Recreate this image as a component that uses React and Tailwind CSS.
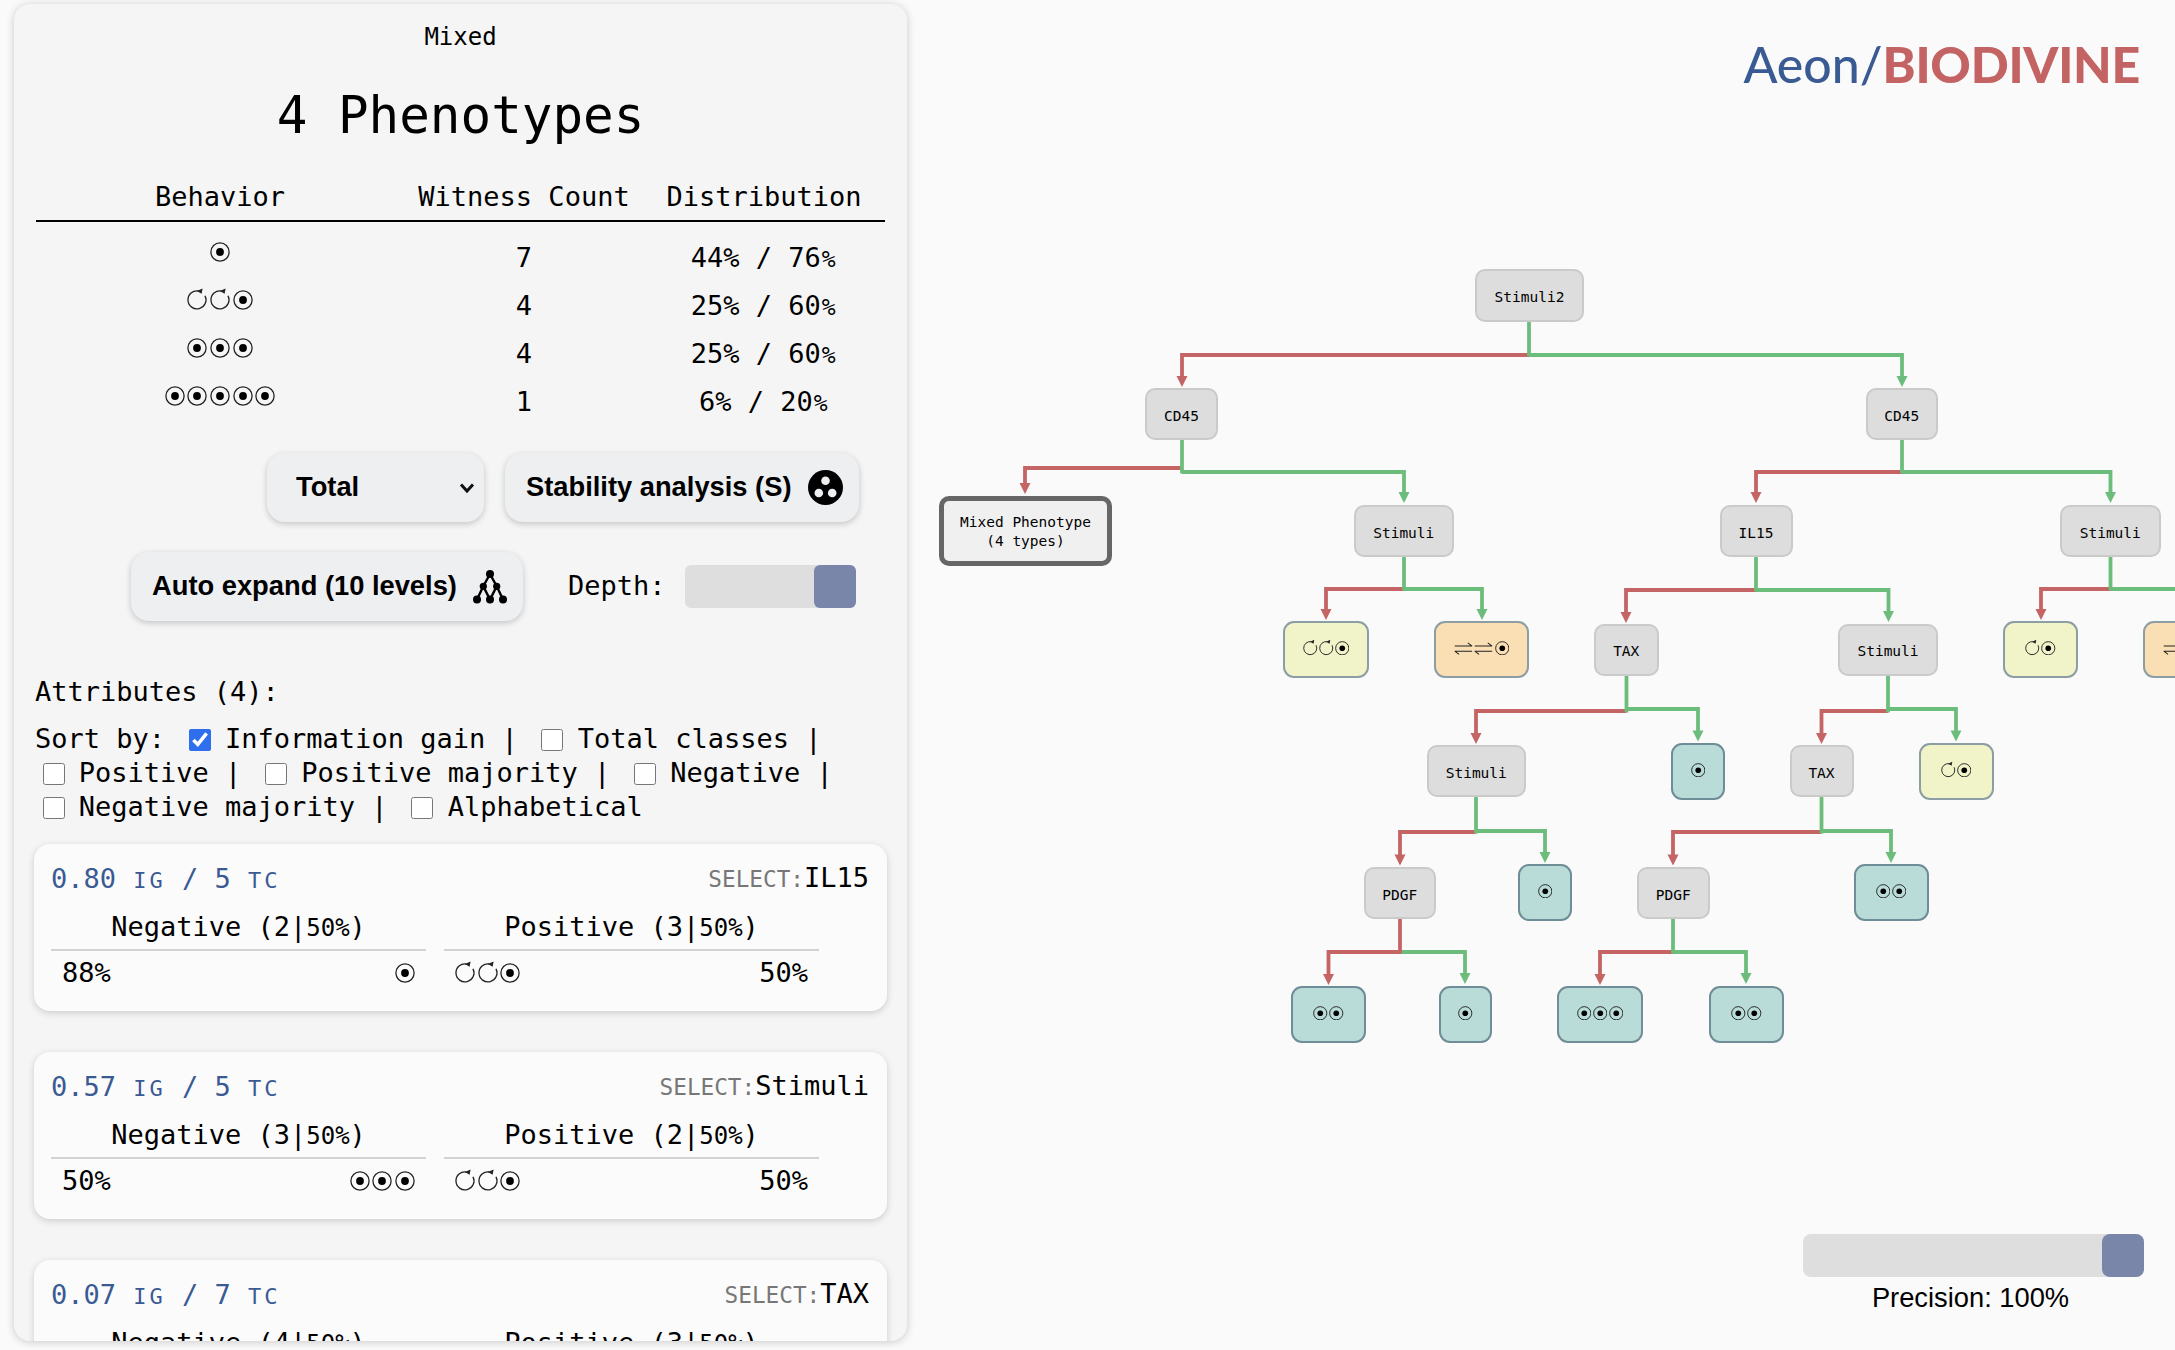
import React from "react";

const MONO = "font-['DejaVu_Sans_Mono','Liberation_Mono',monospace]";
const OX = 907;

function Stable({ s }) {
  return (
    <svg width={s} height={s} viewBox="0 0 20 20" className="block shrink-0">
      <circle cx="10" cy="10" r="9.1" fill="none" stroke="#222" strokeWidth="1.3" />
      <circle cx="10" cy="10" r="3.9" fill="#000" />
    </svg>
  );
}
function Osc({ s }) {
  return (
    <svg width={s} height={s} viewBox="0 0 20 20" className="block shrink-0 overflow-visible">
      <path d="M11.5 1 A9 9 0 1 0 18 5.8" fill="none" stroke="#222" strokeWidth="1.3" />
      <path d="M9.8 1 L15.6 -1.6 L14.6 3.8 Z" fill="#222" />
    </svg>
  );
}
function Dis({ s }) {
  return (
    <svg width={s * 1.3} height={s} viewBox="0 0 26 20" className="block shrink-0">
      <path d="M1 7 H25 M19 2.5 L25 7" fill="none" stroke="#222" strokeWidth="1.4" />
      <path d="M25 14 H1 M7 18.5 L1 14" fill="none" stroke="#222" strokeWidth="1.4" />
    </svg>
  );
}
function Beh({ k, s = 20, gap = "gap-[2.7px]" }) {
  return (
    <span className={`inline-flex items-center ${gap}`}>
      {k.split("").map((c, i) =>
        c === "s" ? <Stable key={i} s={s} /> : c === "o" ? <Osc key={i} s={s} /> : <Dis key={i} s={s} />
      )}
    </span>
  );
}

const rows = [
  ["s", "7", "44% / 76"],
  ["oos", "4", "25% / 60"],
  ["sss", "4", "25% / 60"],
  ["sssss", "1", "6% / 20"],
];

function Check({ label, checked, last }) {
  return (
    <span className="whitespace-nowrap">
      <input
        type="checkbox"
        readOnly
        checked={!!checked}
        className="w-[22px] h-[22px] ml-[7.5px] mr-[-2px] align-[-3px] accent-[#2f6fed]"
      />{" "}
      {label}
      {last ? "" : " |"}
    </span>
  );
}

function Card({ ig, tc, name, neg, pos, negK, negP, posK, posP }) {
  return (
    <div className="bg-[#fbfbfb] rounded-[16px] shadow-[0_2px_7px_rgba(0,0,0,0.17)] pt-[18px] pb-[21px] pl-[17px] pr-[18px] mb-[41px]">
      <div className="flex justify-between items-baseline h-[34px] leading-[34px]">
        <span className="text-[#3a5a94]">
          {ig} <span className="text-[22px] tracking-[3px] pl-[1px]">IG</span> / {tc}{" "}
          <span className="text-[22px] tracking-[3px] pl-[1px]">TC</span>
        </span>
        <span className="relative top-[-1px]">
          <span className="text-[22.7px] text-[#777]">SELECT:</span>
          {name}
        </span>
      </div>
      <div className="grid grid-cols-[375px_375px] gap-x-[18px] mt-[14px]">
        {[
          ["Negative", neg],
          ["Positive", pos],
        ].map(([t, n]) => (
          <div key={t} className="text-center leading-[34px] pb-[4px] border-b-2 border-[#d2d2d2]">
            {t} ({n}|<span className="text-[24px]">50%</span>)
          </div>
        ))}
        <div className="flex justify-between items-center h-[34px] mt-[5px] px-[11px]">
          <span>{negP}</span>
          <Beh k={negK} />
        </div>
        <div className="flex justify-between items-center h-[34px] mt-[5px] px-[11px]">
          <Beh k={posK} />
          <span>{posP}</span>
        </div>
      </div>
    </div>
  );
}

const branches = [
  [1529, 322, 355, 1182, 387, 355, 1902, 387],
  [1182, 440, 468, 1025, 494, 472, 1404, 503],
  [1404, 557, 589, 1326, 620, 589, 1482, 620],
  [1902, 440, 472, 1756, 503, 472, 2110.5, 503],
  [1756, 557, 590, 1626, 623, 590, 1888.5, 622],
  [2110.5, 557, 589, 2041, 620, 589, 2190, 620],
  [1626.5, 675, 711, 1476, 744, 709, 1698, 741.5],
  [1888, 675, 711, 1821.5, 744, 709, 1956, 741.5],
  [1476, 797, 832, 1400, 865.5, 831, 1545, 863],
  [1821.5, 797, 832, 1673, 865.5, 831, 1891, 863],
  [1400, 919, 952, 1328.5, 985, 952, 1465, 984, true],
  [1673, 919, 952, 1600, 985, 952, 1746, 984],
];

const gray = [
  ["Stimuli2", 1475, 1584, 269, 322],
  ["CD45", 1145, 1218, 388, 440],
  ["Stimuli", 1354, 1453.5, 505, 557],
  ["CD45", 1865.5, 1938, 388, 440],
  ["IL15", 1719.5, 1792.5, 505, 557],
  ["Stimuli", 2060, 2160.5, 505, 557],
  ["TAX", 1594, 1658.5, 624, 675.5],
  ["Stimuli", 1838, 1938, 624, 675.5],
  ["Stimuli", 1426.5, 1526, 745, 797],
  ["TAX", 1789.5, 1853.5, 745, 797],
  ["PDGF", 1363.5, 1436, 867, 919],
  ["PDGF", 1637, 1709.5, 867, 919],
];

const Y = "bg-[#f1f4c8] border-[#8c9ea3]";
const O = "bg-[#fadfb4] border-[#8c9ea3]";
const T = "bg-[#b9dcd9] border-[#6e8d96]";
const leaves = [
  ["oos", Y, 1283, 1369, 621, 678],
  ["dds", O, 1434, 1529, 621, 678],
  ["os", Y, 2003, 2078, 621, 678],
  ["dds", O, 2143, 2238, 621, 678],
  ["s", T, 1671, 1725, 743, 800],
  ["os", Y, 1918.5, 1993.5, 743, 800],
  ["s", T, 1518, 1572, 864, 921],
  ["ss", T, 1853.5, 1928.5, 864, 921],
  ["ss", T, 1291, 1366, 986, 1042.5],
  ["s", T, 1438.5, 1492, 986, 1042.5],
  ["sss", T, 1557, 1643, 986, 1042.5],
  ["ss", T, 1709, 1783.5, 986, 1042.5],
];

const box = (x0, x1, y0, y1) => ({ left: x0 - OX, width: x1 - x0, top: y0, height: y1 - y0 });

function Edges() {
  const red = "#c56464";
  const green = "#6cbd7c";
  const head = (x, tip, c) => (
    <path d={`M${x - 5.5} ${tip - 11} H${x + 5.5} L${x} ${tip} Z`} fill={c} />
  );
  return (
    <svg className="absolute left-0 top-0" width={2175 - OX} height="1350" viewBox={`${OX} 0 ${2175 - OX} 1350`}>
      {branches.map(([x, y0, yr, xr, tr, yg, xg, tg, stemRed], i) => (
        <g key={i} fill="none" strokeWidth="3.8">
          <path d={`M${x} ${yg} H${xg} V${tg - 8}`} stroke={green} />
          <path d={`M${x} ${yr} H${xr} V${tr - 8}`} stroke={red} />
          <path d={`M${x} ${y0} V${Math.max(yr, yg) + 1.5}`} stroke={stemRed ? red : green} />
          {head(xg, tg, green)}
          {head(xr, tr, red)}
        </g>
      ))}
    </svg>
  );
}

export default function App() {
  return (
    <div className={`relative flex w-[2175px] h-[1350px] overflow-hidden bg-[#fafafa] text-black ${MONO}`}>
      <aside className="relative z-10 shrink-0 w-[893px] h-[1337px] mt-[4px] ml-[14px] px-[22px] pt-[17px] overflow-hidden rounded-[16px] bg-[#f5f5f5] shadow-[0_1px_8px_rgba(0,0,0,0.2)] text-[27px]">
        <div className="text-center text-[24px] leading-[32px]">Mixed</div>
        <h1 className="text-center text-[50.9px] leading-[60px] mt-[33px]">4 Phenotypes</h1>

        <div className="grid grid-cols-[368px_240px_240px] leading-[34px] mt-[34px] pb-[6px] border-b-2 border-black text-center">
          <div>Behavior</div>
          <div>Witness Count</div>
          <div>Distribution</div>
        </div>
        <div className="pt-[12px]">
          {rows.map(([k, n, d], i) => (
            <div key={i} className="grid grid-cols-[368px_240px_240px] h-[48px] items-center text-center">
              <div className="flex justify-center -translate-y-[6px]">
                <Beh k={k} />
              </div>
              <div>{n}</div>
              <div>
                {d}
                <span className="text-[23px] font-light pl-[1px] pr-[1.5px]">%</span>
              </div>
            </div>
          ))}
        </div>

        <div className="flex justify-end gap-[21px] pr-[26px] mt-[27px] font-['Liberation_Sans',Arial,sans-serif] font-bold text-[27.3px]">
          <div className="flex items-center justify-between w-[217px] h-[69px] pl-[29px] pr-[7px] rounded-[18px] bg-[#eeeff1] shadow-[0_2px_6px_rgba(0,0,0,0.2)]">
            <span>Total</span>
            <svg width="20" height="14" viewBox="0 0 20 14" fill="none" stroke="#111" strokeWidth="3">
              <path d="M4 3.5 L10 10 L16 3.5" />
            </svg>
          </div>
          <div className="flex items-center justify-between w-[354px] h-[69px] pl-[21px] pr-[16px] rounded-[18px] bg-[#eeeff1] shadow-[0_2px_6px_rgba(0,0,0,0.2)]">
            <span>Stability analysis (S)</span>
            <svg width="35" height="35" viewBox="0 0 35 35" className="shrink-0">
              <circle cx="17.5" cy="17.5" r="17.5" fill="#000" />
              <circle cx="17.5" cy="10.8" r="4.3" fill="#eeeff1" />
              <circle cx="10.8" cy="23" r="4.3" fill="#eeeff1" />
              <circle cx="24.2" cy="23" r="4.3" fill="#eeeff1" />
            </svg>
          </div>
        </div>

        <div className="flex justify-end items-center pr-[29px] mt-[30px]">
          <div className="flex items-center justify-between w-[392px] h-[69px] pl-[21px] pr-[16px] rounded-[18px] bg-[#eeeff1] shadow-[0_2px_6px_rgba(0,0,0,0.2)] font-['Liberation_Sans',Arial,sans-serif] font-bold text-[27.3px]">
            <span>Auto expand (10 levels)</span>
            <svg width="34" height="34" viewBox="0 0 34 34" className="shrink-0">
              <path
                d="M17 4 L10.3 16.3 L4 29.6 M10.3 16.3 L17 29.6 M17 4 L23.7 16.3 L30 29.6 M23.7 16.3 L17 29.6"
                fill="none"
                stroke="#000"
                strokeWidth="2.4"
              />
              <circle cx="17" cy="4" r="4" fill="#000" />
              <circle cx="10.3" cy="16.3" r="3.6" fill="#000" />
              <circle cx="23.7" cy="16.3" r="3.6" fill="#000" />
              <circle cx="4" cy="29.6" r="4" fill="#000" />
              <circle cx="17" cy="29.6" r="4" fill="#000" />
              <circle cx="30" cy="29.6" r="4" fill="#000" />
            </svg>
          </div>
          <span className="ml-[45px] w-[117px]">Depth:</span>
          <div className="flex justify-end w-[171px] h-[43px] rounded-[6px] bg-[#dedede]">
            <div className="w-[42px] h-full rounded-[6px] bg-[#7a86a9]" />
          </div>
        </div>

        <div className="leading-[34px] mt-[54px] -ml-[1px]">Attributes (4):</div>
        <div className="leading-[34px] mt-[13px] w-[848px] -ml-[1px]">
          Sort by: <Check label="Information gain" checked /> <Check label="Total classes" />{" "}
          <Check label="Positive" /> <Check label="Positive majority" /> <Check label="Negative" />{" "}
          <Check label="Negative majority" /> <Check label="Alphabetical" last />
        </div>

        <div className="mt-[20px] -mx-[2px]">
          <Card ig="0.80" tc="5" name="IL15" neg="2" pos="3" negK="s" negP="88%" posK="oos" posP="50%" />
          <Card ig="0.57" tc="5" name="Stimuli" neg="3" pos="2" negK="sss" negP="50%" posK="oos" posP="50%" />
          <Card ig="0.07" tc="7" name="TAX" neg="4" pos="3" negK="ss" negP="50%" posK="os" posP="50%" />
        </div>
      </aside>

      <main className="relative flex-1 h-full">
        <Edges />
        {gray.map(([t, x0, x1, y0, y1], i) => (
          <div
            key={i}
            style={box(x0, x1, y0, y1)}
            className="absolute flex items-center justify-center pt-[5px] rounded-[10px] bg-[#dddddd] border-2 border-[#cacaca] text-[14.5px]"
          >
            {t}
          </div>
        ))}
        <div
          style={box(939, 1112, 496, 566)}
          className="absolute flex items-center justify-center text-center pt-[2px] rounded-[10px] bg-[#f0f0f0] border-[5px] border-[#666666] text-[14.5px] leading-[19px]"
        >
          Mixed Phenotype
          <br />
          (4 types)
        </div>
        {leaves.map(([k, c, x0, x1, y0, y1], i) => (
          <div
            key={i}
            style={box(x0, x1, y0, y1)}
            className={`absolute flex items-center justify-center pb-[3px] rounded-[11px] border-2 ${c}`}
          >
            <Beh k={k} s={14.5} gap="gap-[1.5px]" />
          </div>
        ))}

        <div className="absolute right-[35px] top-[31px] flex items-baseline font-['Lato',sans-serif] text-[50px] leading-[66px] whitespace-nowrap">
          <span className="text-[#3a5a94] font-medium">Aeon/</span>
          <span className="font-black text-[#c46363] tracking-[-0.25px]">BIODIVINE</span>
        </div>

        <div className="absolute left-[896px] top-[1234px] w-[341px] font-['Liberation_Sans',Arial,sans-serif]">
          <div className="flex justify-end h-[43px] rounded-[8px] bg-[#dedede]">
            <div className="w-[42px] h-full rounded-[8px] bg-[#7a86a9]" />
          </div>
          <div className="text-center text-[27.3px] leading-[34px] mt-[4px] pr-[6px]">Precision: 100%</div>
        </div>
      </main>
    </div>
  );
}
